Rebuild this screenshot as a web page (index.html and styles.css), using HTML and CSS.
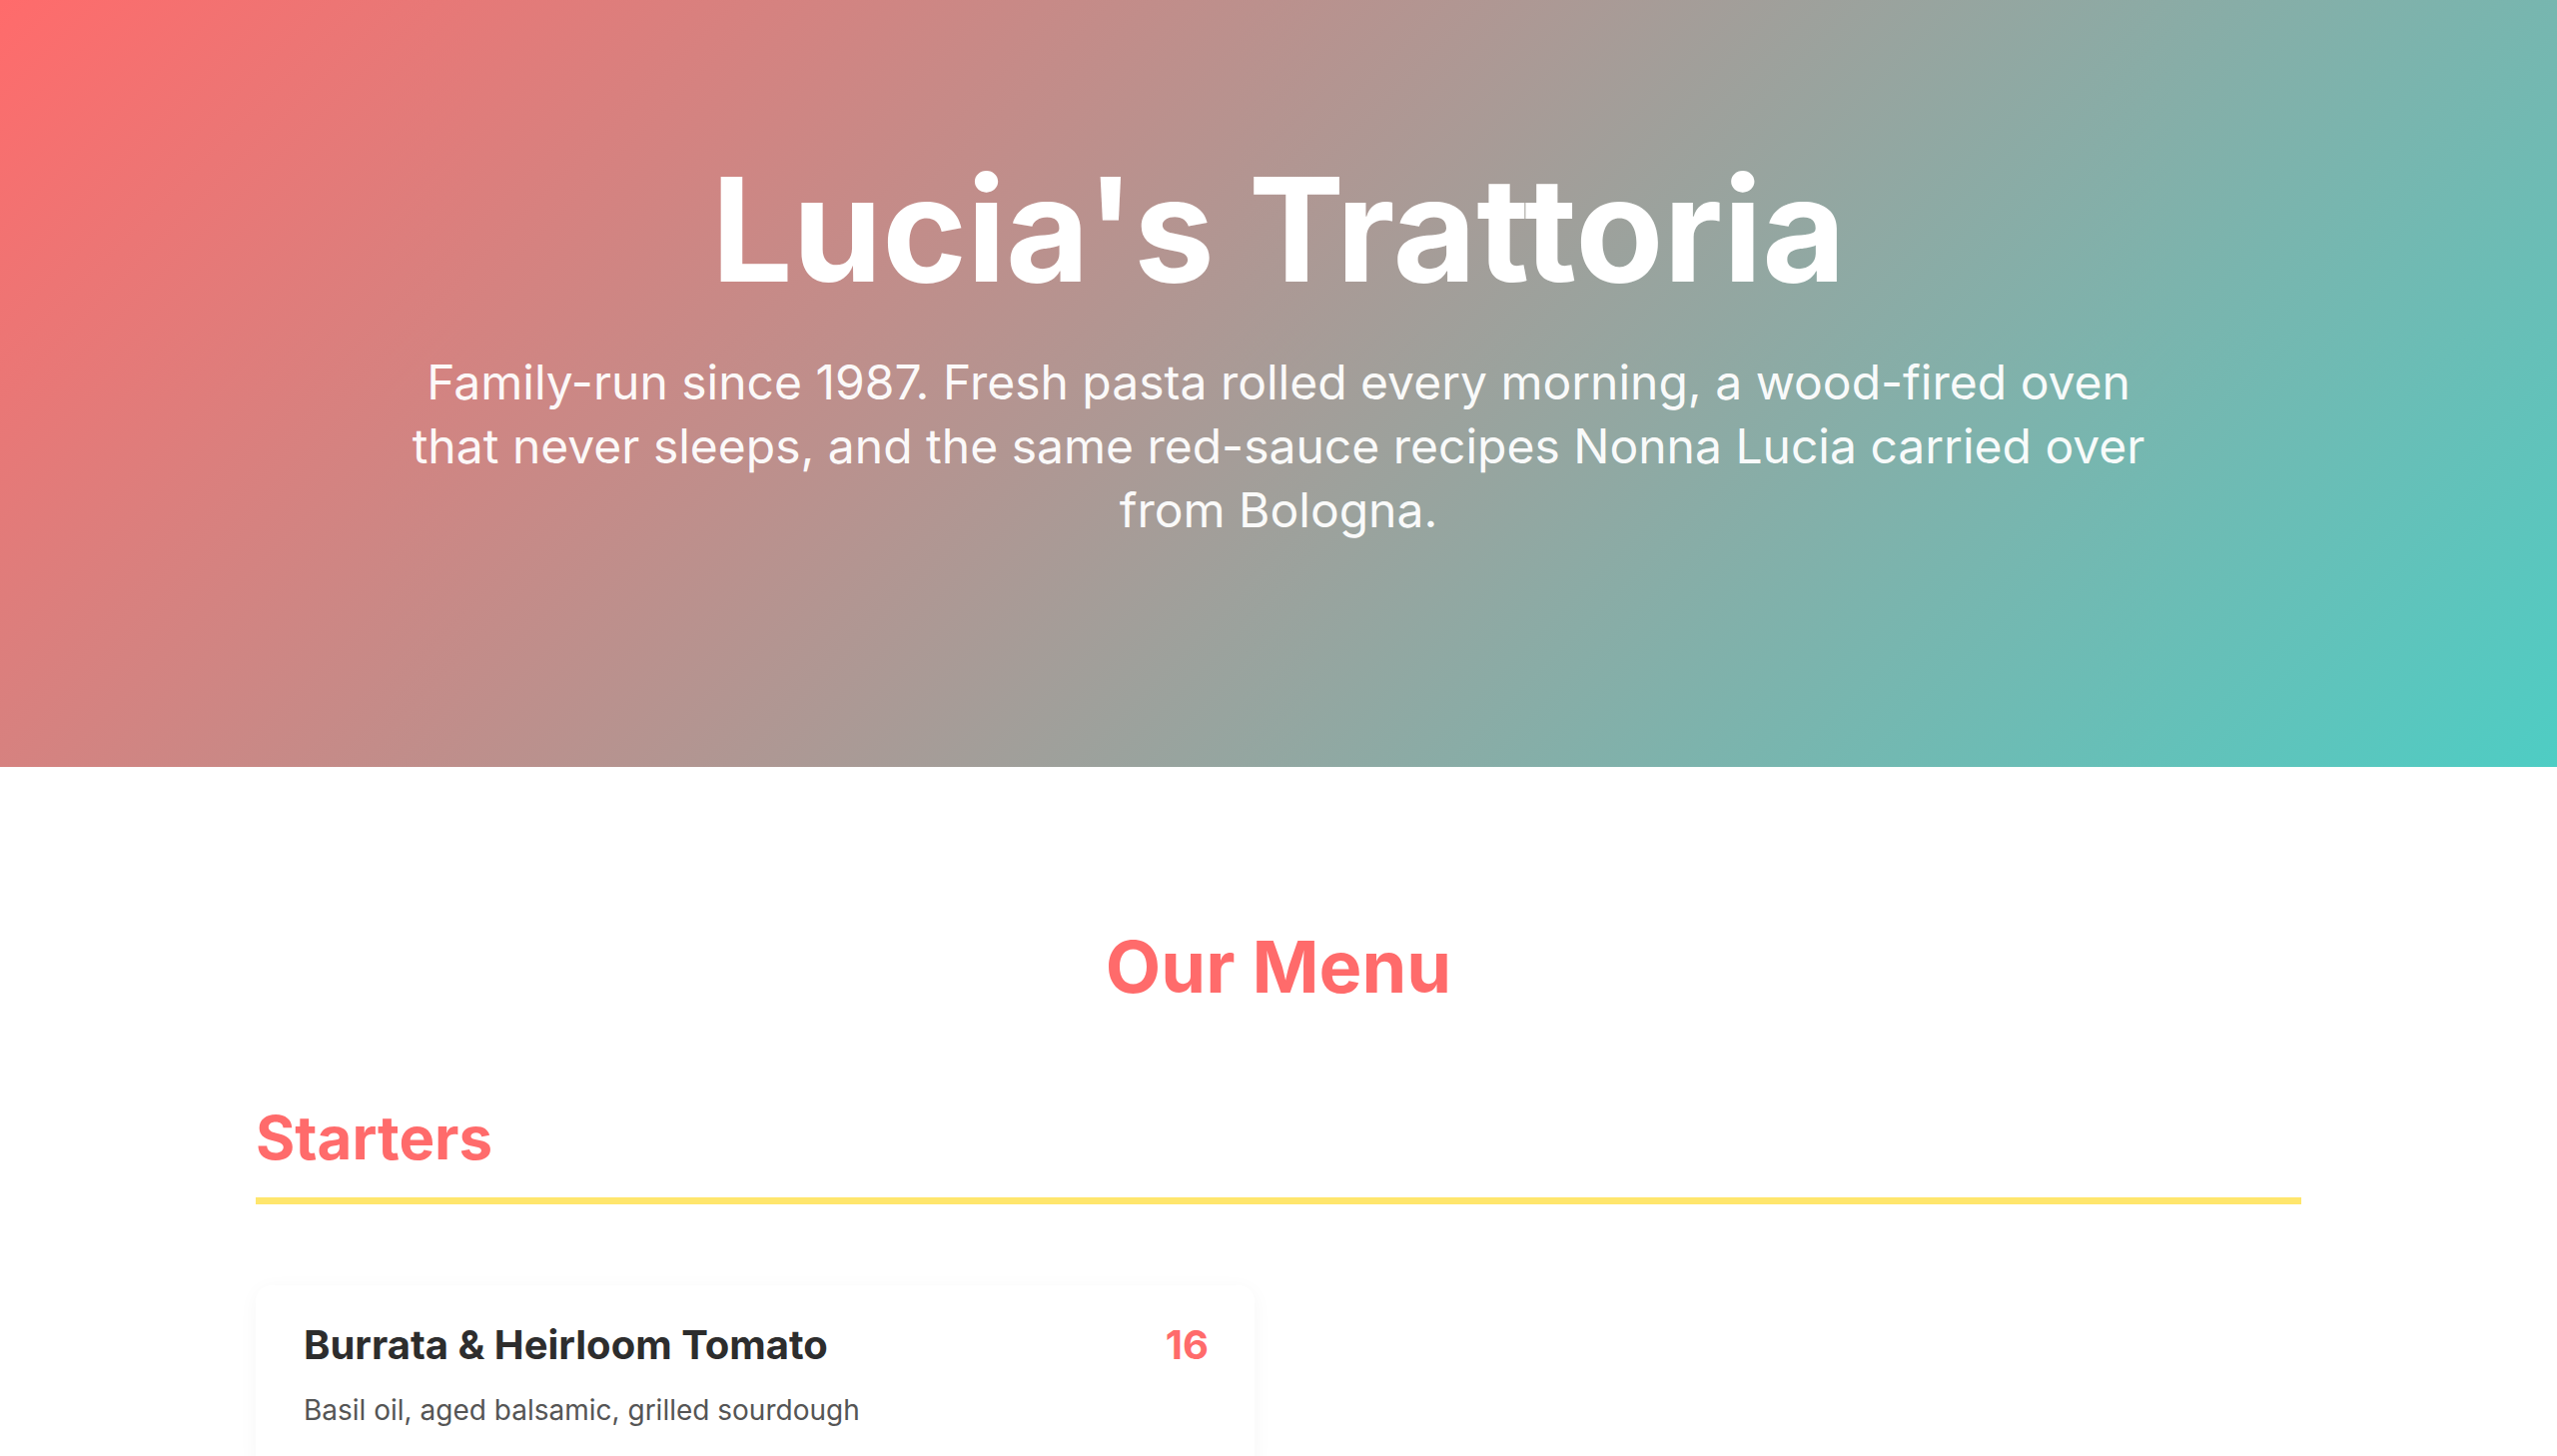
FILE: index.html
```html
<!DOCTYPE html>
<html lang="en">
<head>
  <meta charset="utf-8">
  <title>Lucia's Trattoria</title>
  <link rel="stylesheet" href="styles.css">
</head>
<body>
  <!-- hero -->
  <header class="hero">
    <h1 class="hero-title">Lucia's Trattoria</h1>
    <p class="hero-text">Family-run since 1987. Fresh pasta rolled every morning, a wood-fired oven that never sleeps, and the same red-sauce recipes Nonna Lucia carried over from Bologna.</p>
  </header>

  <!-- menu -->
  <main class="menu">
    <h2 class="menu-title">Our Menu</h2>

    <section class="menu-section">
      <h3 class="section-title">Starters</h3>
      <div class="menu-grid">
        <div class="menu-item">
          <div class="item-head">
            <span class="item-name">Burrata &amp; Heirloom Tomato</span>
            <span class="item-price">16</span>
          </div>
          <p class="item-desc">Basil oil, aged balsamic, grilled sourdough</p>
        </div>
      </div>
    </section>
  </main>
</body>
</html>
```

FILE: styles.css
```css
body {
  margin: 0;
  padding: 0;
  font-family: 'Inter', 'Noto Sans', sans-serif;
  background: #fff;
  color: #2d2d2d;
}

.hero {
  background: linear-gradient(135deg, #ff6b6b 0%, #4ecdc4 100%);
  color: #fff;
  text-align: center;
  padding: 144px 32px 225px;
}

.hero-title {
  margin: 0 0 34px;
  font-size: 144px;
  font-weight: 700;
  line-height: 1.2;
}

.hero-text {
  margin: 0 auto;
  max-width: 1780px;
  font-size: 48px;
  line-height: 64px;
  opacity: 0.95;
}

.menu {
  max-width: 2048px;
  margin: 0 auto;
  padding: 157px 0 80px;
}

.menu-title {
  margin: 0 0 92px;
  text-align: center;
  font-size: 72px;
  font-weight: 700;
  line-height: 1.2;
  color: #ff6b6b;
}

.section-title {
  margin: 0 0 81px;
  padding-bottom: 24px;
  border-bottom: 7px solid #ffe66d;
  font-size: 60px;
  font-weight: 700;
  line-height: 1.2;
  color: #ff6b6b;
}

.menu-grid {
  display: grid;
  grid-template-columns: 1fr 1fr;
  gap: 48px;
}

.menu-item {
  background: #fff;
  border-radius: 16px;
  padding: 36px 46px 40px 48px;
  box-shadow: 0 4px 20px rgba(0, 0, 0, 0.04);
}

.item-head {
  display: flex;
  justify-content: space-between;
  align-items: baseline;
  gap: 24px;
}

.item-name {
  font-size: 40px;
  font-weight: 700;
  line-height: 1.2;
  color: #2d2d2d;
}

.item-price {
  font-size: 40px;
  font-weight: 700;
  line-height: 1.2;
  color: #ff6b6b;
}

.item-desc {
  margin: 20px 0 0;
  font-size: 28px;
  line-height: 1.5;
  color: #555;
}
```
